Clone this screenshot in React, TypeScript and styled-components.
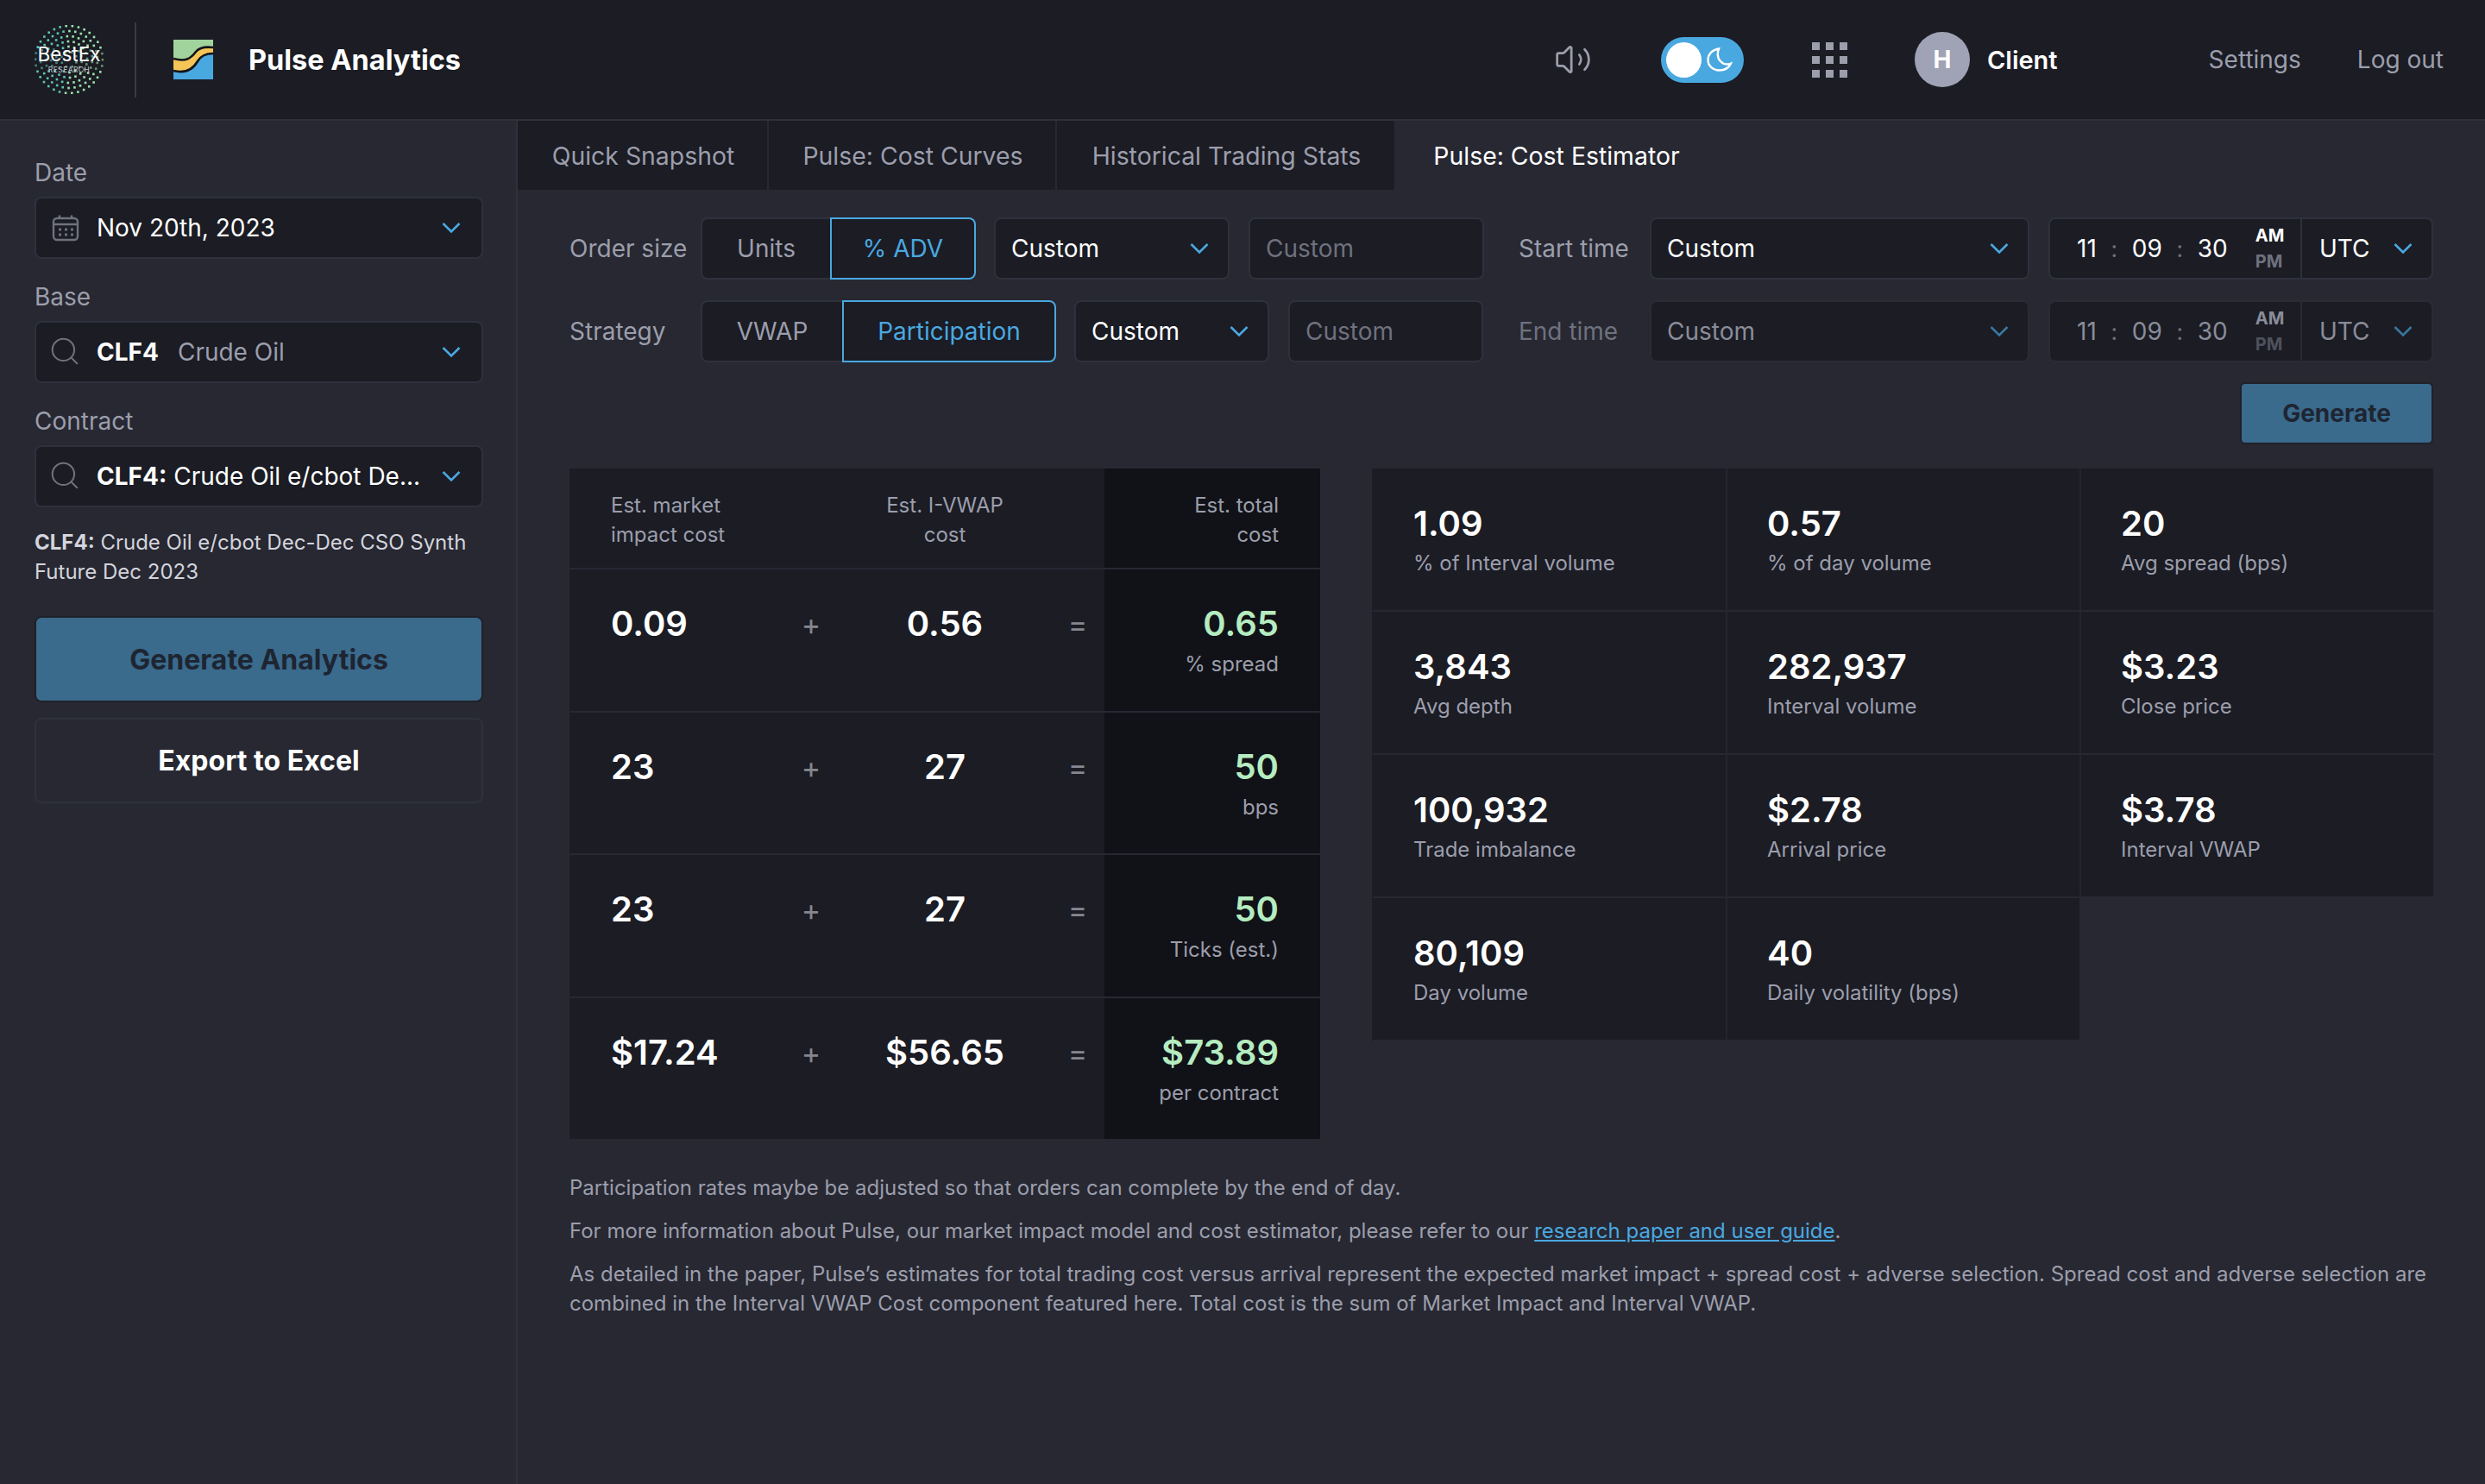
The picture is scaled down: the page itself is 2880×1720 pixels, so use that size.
import { ReactNode } from 'react'
import styled, { createGlobalStyle } from 'styled-components'
import { Search, Volume2 } from 'lucide-react'

const colors = {
  page: '#272832',
  panel: '#1b1c24',
  darkest: '#111217',
  line: '#2e313c',
  lineOff: '#292b35',
  muted: '#9c9eac',
  off: '#8a8c99',
  dim: '#6f717e',
  blue: '#4aa8e0',
  green: '#b5ecc0',
  button: '#3a6a8c',
}

const GlobalStyle = createGlobalStyle`
  html, body {
    margin: 0;
    padding: 0;
    background: ${colors.page};
  }
  body {
    font-family: Inter, "Noto Sans", sans-serif;
    color: #fff;
  }
  * {
    box-sizing: border-box;
  }
`

const Page = styled.div`
  width: 2880px;
  height: 1720px;
  display: flex;
  flex-direction: column;
  overflow: hidden;
`

const Header = styled.header`
  height: 140px;
  flex: none;
  display: flex;
  align-items: center;
  padding: 0 48px 0 40px;
  background: ${colors.panel};
  border-bottom: 2px solid ${colors.line};
`

const HeaderDivider = styled.div`
  width: 2px;
  height: 87px;
  margin: 0 43px 0 36px;
  background: #3a3b46;
`

const BrandName = styled.div`
  margin-left: 41px;
  font-size: 32.5px;
  font-weight: 700;
`

const HeaderRight = styled.div`
  margin-left: auto;
  display: flex;
  align-items: center;
`

const SoundIcon = styled(Volume2)`
  color: ${colors.muted};
  width: 44px;
  height: 44px;
`

const ThemeToggle = styled.div`
  width: 96px;
  height: 53px;
  margin-left: 80px;
  padding: 0 6px;
  display: flex;
  align-items: center;
  gap: 6px;
  border-radius: 27px;
  background: ${colors.blue};
`

const ToggleKnob = styled.span`
  width: 41px;
  height: 41px;
  border-radius: 50%;
  background: #fff;
`

const AppsGrid = styled.div`
  margin-left: 79px;
  display: grid;
  grid-template-columns: repeat(3, 9px);
  grid-auto-rows: 9px;
  gap: 7px;
`

const AppsDot = styled.span`
  background: ${colors.muted};
`

const Avatar = styled.div`
  width: 64px;
  height: 64px;
  margin-left: 78px;
  display: flex;
  align-items: center;
  justify-content: center;
  border-radius: 50%;
  background: #a0a3b5;
  font-size: 28px;
  font-weight: 700;
`

const ClientName = styled.div`
  margin-left: 20px;
  font-size: 29px;
  font-weight: 600;
`

const HeaderLink = styled.a<{ $gap: number }>`
  margin-left: ${({ $gap }) => $gap}px;
  font-size: 28px;
  color: ${colors.muted};
`

const Body = styled.div`
  flex: 1;
  display: flex;
  min-height: 0;
`

const Sidebar = styled.aside`
  width: 600px;
  flex: none;
  padding: 42px 38px 0 40px;
  border-right: 2px solid ${colors.line};
`

const FieldGroup = styled.div`
  margin-bottom: 26px;
`

const FieldLabel = styled.div`
  height: 36px;
  margin-bottom: 10px;
  line-height: 36px;
  font-size: 28px;
  color: ${colors.muted};
`

const Field = styled.div<{ $width?: number; $disabled?: boolean }>`
  display: flex;
  align-items: center;
  height: 72px;
  padding: 0 22px 0 18px;
  ${({ $width }) => ($width ? `width: ${$width}px;` : 'flex: 1;')}
  flex-shrink: 0;
  border: 2px solid ${({ $disabled }) => ($disabled ? colors.lineOff : colors.line)};
  border-radius: 8px;
  background: ${colors.panel};
  font-size: 28px;
  color: ${({ $disabled }) => ($disabled ? colors.off : '#fff')};
  white-space: nowrap;
`

const SideField = styled(Field)`
  padding: 0 24px 0 18px;
`

const FieldIconSlot = styled.span`
  display: flex;
  width: 52px;
  flex: none;
  color: ${colors.dim};
`

const FieldText = styled.span`
  flex: 1;
  min-width: 0;
`

const Strong = styled.b`
  font-weight: 700;
  margin-right: 22px;
`

const TightStrong = styled(Strong)`
  margin-right: 8px;
`

const Dimmed = styled.span`
  color: ${colors.muted};
`

const Description = styled.p`
  margin: 24px 0 34px;
  font-size: 24px;
  line-height: 34px;
  color: #d3d4dc;
  b {
    font-weight: 700;
  }
`

const PrimaryButton = styled.button`
  display: block;
  width: 100%;
  height: 100px;
  border: 2px solid #1f2129;
  border-radius: 8px;
  background: ${colors.button};
  font: 700 32px Inter, sans-serif;
  color: #1e2532;
`

const SecondaryButton = styled.button`
  display: block;
  width: 100%;
  height: 99px;
  margin-top: 18px;
  border: 2px solid ${colors.line};
  border-radius: 8px;
  background: transparent;
  font: 700 32px Inter, sans-serif;
  color: #fff;
`

const Main = styled.main`
  flex: 1;
  min-width: 0;
  display: flex;
  flex-direction: column;
`

const Tabs = styled.nav`
  display: flex;
  height: 80px;
  flex: none;
`

const Tab = styled.div<{ $width: number; $active?: boolean }>`
  width: ${({ $width }) => $width}px;
  padding-left: 2px;
  display: flex;
  align-items: center;
  justify-content: center;
  font-size: 28.4px;
  color: ${({ $active }) => ($active ? '#fff' : colors.muted)};
  background: ${({ $active }) => ($active ? 'transparent' : colors.panel)};
  border-right: 2px solid ${({ $active }) => ($active ? 'transparent' : colors.page)};
`

const Content = styled.div`
  padding: 32px 60px 0;
`

const Controls = styled.div`
  display: grid;
  grid-template-columns: 1060px 1060px;
  column-gap: 40px;
  row-gap: 24px;
`

const ControlRow = styled.div`
  display: flex;
  align-items: center;
`

const ControlLabel = styled.div<{ $disabled?: boolean }>`
  width: 152px;
  flex: none;
  font-size: 28px;
  color: ${({ $disabled }) => ($disabled ? colors.dim : colors.muted)};
`

const Segments = styled.div`
  display: flex;
  height: 72px;
  margin-right: 21px;
  flex: none;
`

const Segment = styled.div<{ $width: number; $active?: boolean }>`
  width: ${({ $width }) => $width}px;
  display: flex;
  align-items: center;
  justify-content: center;
  font-size: 28px;
  background: ${colors.panel};
  color: ${({ $active }) => ($active ? colors.blue : colors.muted)};
  border: 2px solid ${({ $active }) => ($active ? colors.blue : colors.line)};
  border-radius: ${({ $active }) => ($active ? '0 8px 8px 0' : '8px 0 0 8px')};
  ${({ $active }) => !$active && 'border-right: none;'}
`

const SelectField = styled(Field)`
  justify-content: space-between;
  margin-right: 22px;
`

const InputField = styled(Field)`
  color: ${colors.dim};
`

const TimeBox = styled.div<{ $disabled?: boolean }>`
  display: flex;
  align-items: center;
  width: 294px;
  height: 72px;
  flex: none;
  padding-left: 31px;
  border: 2px solid ${({ $disabled }) => ($disabled ? colors.lineOff : colors.line)};
  border-radius: 8px 0 0 8px;
  background: ${colors.panel};
  font-size: 28px;
  color: ${({ $disabled }) => ($disabled ? colors.off : '#fff')};
`

const TimeSeparator = styled.span`
  width: 41px;
  text-align: center;
  font-size: 26px;
  color: ${colors.dim};
`

const Meridiem = styled.div`
  margin-left: 32px;
  display: flex;
  flex-direction: column;
  gap: 7px;
  font-size: 20px;
  line-height: 23px;
  font-weight: 700;
`

const MeridiemOff = styled.span<{ $disabled?: boolean }>`
  color: ${({ $disabled }) => ($disabled ? '#4f515d' : colors.dim)};
`

const MeridiemOn = styled.span<{ $disabled?: boolean }>`
  color: ${({ $disabled }) => ($disabled ? colors.off : '#fff')};
`

const ZoneField = styled(Field)`
  width: 152px;
  flex: none;
  justify-content: space-between;
  border-left: none;
  border-radius: 0 8px 8px 0;
  padding: 0 22px 0 20px;
`

const GenerateRow = styled.div`
  display: flex;
  justify-content: flex-end;
  margin-top: 23px;
`

const GenerateButton = styled.button`
  width: 224px;
  height: 72px;
  border: 2px solid #1f2129;
  border-radius: 6px;
  background: ${colors.button};
  font: 700 28px Inter, sans-serif;
  color: #1e2532;
`

const Results = styled.div`
  display: flex;
  align-items: flex-start;
  margin-top: 28px;
`

const CostTable = styled.div`
  width: 870px;
  flex: none;
`

const CostRow = styled.div<{ $head?: boolean }>`
  display: grid;
  grid-template-columns: 240px 76px 238px 66px 250px;
  height: ${({ $head }) => ($head ? 115 : 165.5)}px;
  background: ${colors.panel};
  border-top: ${({ $head }) => ($head ? 'none' : `2px solid ${colors.page}`)};
`

const HeadCell = styled.div<{ $align: string }>`
  padding-top: 26px;
  font-size: 24px;
  line-height: 34px;
  color: ${colors.muted};
  text-align: ${({ $align }) => $align};
`

const HeadFirst = styled(HeadCell)`
  padding-left: 48px;
  white-space: nowrap;
`

const HeadTotal = styled(HeadCell)`
  grid-column: 5;
  padding-right: 48px;
  background: ${colors.darkest};
`

const HeadMiddle = styled(HeadCell)`
  grid-column: 3;
`

const CostValue = styled.div<{ $align: string }>`
  padding-top: 35px;
  font-size: 40px;
  line-height: 56px;
  font-weight: 600;
  text-align: ${({ $align }) => $align};
`

const FirstValue = styled(CostValue)`
  padding-left: 48px;
`

const Operator = styled.div`
  padding: 36px 0 0 4px;
  text-align: center;
  font-size: 34px;
  line-height: 56px;
  color: #85868f;
`

const TotalCell = styled.div`
  padding: 35px 48px 0 0;
  text-align: right;
  background: ${colors.darkest};
`

const TotalValue = styled.div`
  font-size: 40px;
  line-height: 56px;
  font-weight: 600;
  color: ${colors.green};
`

const TotalUnit = styled.div`
  margin-top: 4px;
  font-size: 24px;
  line-height: 30px;
  color: ${colors.muted};
`

const StatsGrid = styled.div`
  width: 1230px;
  margin-left: 60px;
  display: grid;
  grid-template-columns: repeat(3, 1fr);
  grid-auto-rows: 166px;
`

const StatCell = styled.div`
  padding: 38px 0 0 46px;
  background: ${colors.panel};
  border-left: 2px solid #24252e;
  border-bottom: 2px solid ${colors.page};
  &:nth-child(3n + 1) {
    border-left-color: ${colors.panel};
  }
`

const StatValue = styled.div`
  font-size: 40px;
  line-height: 52px;
  font-weight: 600;
`

const StatLabel = styled.div`
  margin-top: 4px;
  font-size: 24px;
  line-height: 32px;
  color: ${colors.muted};
`

const Notes = styled.div`
  margin-top: 40px;
  font-size: 24px;
  line-height: 34px;
  color: ${colors.muted};
  p {
    margin: 0 0 16px;
  }
`

const NoteLink = styled.a`
  color: ${colors.blue};
  text-decoration: underline;
`

const SearchGlyph = styled(Search)`
  margin-left: -4px;
  margin-top: -2px;
`

const Chevron = ({ muted }: { muted?: boolean }) => (
  <svg width="22" height="14" viewBox="0 0 22 14" fill="none" style={{ flex: 'none', opacity: muted ? 0.65 : 1 }}>
    <path d="M1.5 2 11 11.5 20.5 2" stroke={colors.blue} strokeWidth="2.6" />
  </svg>
)

const CalendarIcon = () => (
  <svg width="32" height="32" viewBox="0 0 32 32" fill="none" stroke="currentColor" strokeWidth="2.4">
    <rect x="2" y="5" width="28" height="25" rx="4" />
    <path d="M2 12h28M9 1.5V6M23 1.5V6" />
    <path d="M8 18h3M15 18h3M22 18h3M8 24h3M15 24h3M22 24h3" strokeWidth="3" />
  </svg>
)

const MoonIcon = () => (
  <svg width="30" height="28" viewBox="0 0 30 28" fill="none" stroke="#fff" strokeWidth="2.4">
    <path d="M14 1.5C5 3 1.5 9 1.5 14.5 1.5 21.5 7.5 26.5 14.5 26.5 21 26.5 26 23 28 18.5 19 22 9.5 14 14 1.5Z" />
  </svg>
)

const PulseLogo = () => (
  <svg width="46" height="46" viewBox="0 0 46 46">
    <rect width="46" height="46" fill="#4aa8e0" />
    <path d="M0 0H46V9C38 8 30 9 26 14 20 22 14 26 0 22Z" fill="#a0d49c" />
    <path d="M0 22C14 26 20 22 26 14 30 9 38 8 46 9V16C38 16 32 18 28 25 24 32 16 40 0 36Z" fill="#f5c557" />
    <path
      d="M0 22C14 26 20 22 26 14 30 9 38 8 46 9M0 36C16 40 24 32 28 25 32 18 38 16 46 16"
      fill="none"
      stroke="#14151b"
      strokeWidth="2.6"
    />
  </svg>
)

const logoRings: [number, number][] = [
  [39, 34],
  [33, 30],
  [27, 25],
  [21, 20],
  [15, 14],
  [9, 8],
]

const BestExLogo = () => (
  <svg width="80" height="80" viewBox="-40 -40 80 80">
    {logoRings.map(([radius, count]) =>
      Array.from({ length: count }, (_, i) => {
        const angle = (i / count) * Math.PI * 2 + radius
        const x = Math.cos(angle) * radius
        const y = Math.sin(angle) * radius
        return (
          <rect
            key={`${radius}-${i}`}
            x={x - 1.3}
            y={y - 1.3}
            width="2.6"
            height="2.6"
            fill={x < -5 ? '#5cc4b4' : '#9be3ab'}
            opacity={Math.abs(y) < 12 ? 0.6 : 1}
          />
        )
      })
    )}
    <text x="0" y="2" textAnchor="middle" fontFamily="Inter, sans-serif" fontSize="22.5" fill="#fff">
      BestEx
    </text>
    <text x="0" y="15" textAnchor="middle" fontFamily="Inter, sans-serif" fontSize="8.4" letterSpacing="0.5" fill="#c5c7d0">
      RESEARCH
    </text>
  </svg>
)

const SearchIcon = () => <SearchGlyph size={38} strokeWidth={1.3} />

const SideSelect = ({ icon, children }: { icon: ReactNode; children: ReactNode }) => (
  <SideField>
    <FieldIconSlot>{icon}</FieldIconSlot>
    <FieldText>{children}</FieldText>
    <Chevron />
  </SideField>
)

const TimePicker = ({ disabled }: { disabled?: boolean }) => (
  <>
    <TimeBox $disabled={disabled}>
      <span>11</span>
      <TimeSeparator>:</TimeSeparator>
      <span>09</span>
      <TimeSeparator>:</TimeSeparator>
      <span>30</span>
      <Meridiem>
        <MeridiemOn $disabled={disabled}>AM</MeridiemOn>
        <MeridiemOff $disabled={disabled}>PM</MeridiemOff>
      </Meridiem>
    </TimeBox>
    <ZoneField $disabled={disabled}>
      UTC
      <Chevron muted={disabled} />
    </ZoneField>
  </>
)

const costRows = [
  { impact: '0.09', vwap: '0.56', total: '0.65', unit: '% spread' },
  { impact: '23', vwap: '27', total: '50', unit: 'bps' },
  { impact: '23', vwap: '27', total: '50', unit: 'Ticks (est.)' },
  { impact: '$17.24', vwap: '$56.65', total: '$73.89', unit: 'per contract' },
]

const stats = [
  ['1.09', '% of Interval volume'],
  ['0.57', '% of day volume'],
  ['20', 'Avg spread (bps)'],
  ['3,843', 'Avg depth'],
  ['282,937', 'Interval volume'],
  ['$3.23', 'Close price'],
  ['100,932', 'Trade imbalance'],
  ['$2.78', 'Arrival price'],
  ['$3.78', 'Interval VWAP'],
  ['80,109', 'Day volume'],
  ['40', 'Daily volatility (bps)'],
]

const App = () => (
  <Page>
    <GlobalStyle />
    <Header>
      <BestExLogo />
      <HeaderDivider />
      <PulseLogo />
      <BrandName>Pulse Analytics</BrandName>
      <HeaderRight>
        <SoundIcon strokeWidth={1.5} />
        <ThemeToggle>
          <ToggleKnob />
          <MoonIcon />
        </ThemeToggle>
        <AppsGrid>
          {Array.from({ length: 9 }, (_, i) => (
            <AppsDot key={i} />
          ))}
        </AppsGrid>
        <Avatar>H</Avatar>
        <ClientName>Client</ClientName>
        <HeaderLink $gap={175}>Settings</HeaderLink>
        <HeaderLink $gap={65}>Log out</HeaderLink>
      </HeaderRight>
    </Header>
    <Body>
      <Sidebar>
        <FieldGroup>
          <FieldLabel>Date</FieldLabel>
          <SideSelect icon={<CalendarIcon />}>Nov 20th, 2023</SideSelect>
        </FieldGroup>
        <FieldGroup>
          <FieldLabel>Base</FieldLabel>
          <SideSelect icon={<SearchIcon />}>
            <Strong>CLF4</Strong>
            <Dimmed>Crude Oil</Dimmed>
          </SideSelect>
        </FieldGroup>
        <FieldLabel>Contract</FieldLabel>
        <SideSelect icon={<SearchIcon />}>
          <TightStrong>CLF4:</TightStrong>Crude Oil e/cbot De...
        </SideSelect>
        <Description>
          <b>CLF4:</b> Crude Oil e/cbot Dec-Dec CSO Synth Future Dec 2023
        </Description>
        <PrimaryButton>Generate Analytics</PrimaryButton>
        <SecondaryButton>Export to Excel</SecondaryButton>
      </Sidebar>
      <Main>
        <Tabs>
          <Tab $width={291}>Quick Snapshot</Tab>
          <Tab $width={334}>Pulse: Cost Curves</Tab>
          <Tab $width={393}>Historical Trading Stats</Tab>
          <Tab $width={372} $active>
            Pulse: Cost Estimator
          </Tab>
        </Tabs>
        <Content>
          <Controls>
            <ControlRow>
              <ControlLabel>Order size</ControlLabel>
              <Segments>
                <Segment $width={150}>Units</Segment>
                <Segment $width={169} $active>
                  % ADV
                </Segment>
              </Segments>
              <SelectField $width={273}>
                Custom
                <Chevron />
              </SelectField>
              <InputField $width={273}>Custom</InputField>
            </ControlRow>
            <ControlRow>
              <ControlLabel>Start time</ControlLabel>
              <SelectField>
                Custom
                <Chevron />
              </SelectField>
              <TimePicker />
            </ControlRow>
            <ControlRow>
              <ControlLabel>Strategy</ControlLabel>
              <Segments>
                <Segment $width={164}>VWAP</Segment>
                <Segment $width={248} $active>
                  Participation
                </Segment>
              </Segments>
              <SelectField $width={226}>
                Custom
                <Chevron />
              </SelectField>
              <InputField $width={226}>Custom</InputField>
            </ControlRow>
            <ControlRow>
              <ControlLabel $disabled>End time</ControlLabel>
              <SelectField $disabled>
                Custom
                <Chevron muted />
              </SelectField>
              <TimePicker disabled />
            </ControlRow>
          </Controls>
          <GenerateRow>
            <GenerateButton>Generate</GenerateButton>
          </GenerateRow>
          <Results>
            <CostTable>
              <CostRow $head>
                <HeadFirst $align="left">
                  Est. market
                  <br />
                  impact cost
                </HeadFirst>
                <HeadMiddle $align="center">
                  Est. I-VWAP
                  <br />
                  cost
                </HeadMiddle>
                <HeadTotal $align="right">
                  Est. total
                  <br />
                  cost
                </HeadTotal>
              </CostRow>
              {costRows.map((row) => (
                <CostRow key={row.unit}>
                  <FirstValue $align="left">{row.impact}</FirstValue>
                  <Operator>+</Operator>
                  <CostValue $align="center">{row.vwap}</CostValue>
                  <Operator>=</Operator>
                  <TotalCell>
                    <TotalValue>{row.total}</TotalValue>
                    <TotalUnit>{row.unit}</TotalUnit>
                  </TotalCell>
                </CostRow>
              ))}
            </CostTable>
            <StatsGrid>
              {stats.map(([value, label]) => (
                <StatCell key={label}>
                  <StatValue>{value}</StatValue>
                  <StatLabel>{label}</StatLabel>
                </StatCell>
              ))}
            </StatsGrid>
          </Results>
          <Notes>
            <p>Participation rates maybe be adjusted so that orders can complete by the end of day.</p>
            <p>
              For more information about Pulse, our market impact model and cost estimator, please refer to our{' '}
              <NoteLink>research paper and user guide</NoteLink>.
            </p>
            <p>
              As detailed in the paper, Pulse’s estimates for total trading cost versus arrival represent the expected
              market impact + spread cost + adverse selection. Spread cost and adverse selection are combined in the
              Interval VWAP Cost component featured here. Total cost is the sum of Market Impact and Interval VWAP.
            </p>
          </Notes>
        </Content>
      </Main>
    </Body>
  </Page>
)

export default App
